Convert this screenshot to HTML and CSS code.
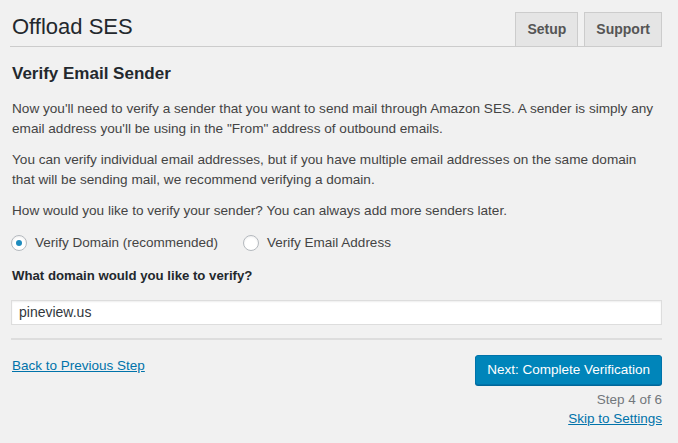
FILE: index.html
```html
<!DOCTYPE html>
<html>
<head>
<meta charset="utf-8">
<link rel="stylesheet" href="styles.css">
</head>
<body>
<div class="wrap">
  <div class="header">
    <h1 class="title">Offload SES</h1>
    <div class="tabs">
      <a class="tab">Setup</a>
      <a class="tab">Support</a>
    </div>
  </div>
  <h2 class="section-title">Verify Email Sender</h2>
  <p class="p1">Now you'll need to verify a sender that you want to send mail through Amazon SES. A sender is simply any email address you'll be using in the "From" address of outbound emails.</p>
  <p class="p2">You can verify individual email addresses, but if you have multiple email addresses on the same domain that will be sending mail, we recommend verifying a domain.</p>
  <p class="p3">How would you like to verify your sender? You can always add more senders later.</p>
  <div class="radios">
    <label class="radio-opt"><span class="radio checked"></span>Verify Domain (recommended)</label>
    <label class="radio-opt"><span class="radio"></span>Verify Email Address</label>
  </div>
  <div class="field-label">What domain would you like to verify?</div>
  <div class="input">pineview.us</div>
  <div class="rule"></div>
  <div class="actions">
    <a class="link back">Back to Previous Step</a>
    <div class="right">
      <span class="button">Next: Complete Verification</span>
      <div class="step">Step 4 of 6</div>
      <a class="link skip">Skip to Settings</a>
    </div>
  </div>
</div>
</body>
</html>
```

FILE: styles.css
```css
html, body {
  margin: 0;
  padding: 0;
  background: #f1f1f1;
}
body {
  font-family: "Liberation Sans", Arial, sans-serif;
  font-size: 13.5px;
  color: #444;
}
.wrap {
  padding: 0 16px 0 11px;
}
.header {
  display: flex;
  justify-content: space-between;
  align-items: flex-end;
  border-bottom: 1px solid #ccc;
  padding-top: 12px;
  margin-left: -1px;
  padding-left: 2px;
}
.title {
  margin: 0 0 5px 0;
  font-size: 22px;
  font-weight: 400;
  line-height: 29px;
  color: #23282d;
}
.tabs {
  display: flex;
  gap: 6px;
  margin-bottom: -1px;
}
.tab {
  display: block;
  box-sizing: border-box;
  height: 35px;
  padding: 0 11px;
  line-height: 33px;
  font-size: 14px;
  font-weight: 700;
  color: #555;
  background: #e5e5e5;
  border: 1px solid #ccc;
}
.section-title {
  margin: 17px 0 0 1px;
  font-size: 17px;
  line-height: 20px;
  font-weight: 700;
  color: #23282d;
}
p {
  margin: 0 0 0 1px;
  line-height: 19.5px;
  font-size: 13.6px;
}
.p1 { margin-top: 15px; }
.p2 { margin-top: 12px; }
.p3 { margin-top: 12px; }
.radios {
  display: flex;
  gap: 25px;
  margin-top: 12px;
  height: 20px;
  align-items: center;
}
.radio-opt {
  display: flex;
  align-items: center;
  gap: 8px;
}
.radio {
  box-sizing: border-box;
  width: 16px;
  height: 16px;
  border-radius: 50%;
  border: 1px solid #b4b9be;
  background: #fff;
  box-shadow: inset 0 1px 2px rgba(0,0,0,0.07);
  display: flex;
  align-items: center;
  justify-content: center;
}
.radio.checked::after {
  content: "";
  width: 6px;
  height: 6px;
  border-radius: 50%;
  background: #1e8cbe;
}
.field-label {
  margin: 13px 0 0 1px;
  line-height: 20px;
  font-size: 13.2px;
  font-weight: 700;
  color: #23282d;
}
.input {
  margin-top: 14px;
  box-sizing: border-box;
  height: 25px;
  background: #fff;
  border: 1px solid #ddd;
  box-shadow: inset 0 1px 2px rgba(0,0,0,0.07);
  padding: 0 7px;
  line-height: 23px;
  font-size: 14px;
  color: #32373c;
}
.rule {
  margin-top: 13px;
  height: 2px;
  background: #ddd;
}
.actions {
  display: flex;
  justify-content: space-between;
  align-items: flex-start;
  margin-top: 15px;
}
.link {
  color: #0073aa;
  text-decoration: underline;
}
.back {
  margin-top: 2px;
  margin-left: 1px;
  line-height: 18px;
}
.right {
  display: flex;
  flex-direction: column;
  align-items: flex-end;
}
.button {
  box-sizing: border-box;
  height: 30px;
  padding: 0 11px;
  line-height: 28px;
  color: #fff;
  background: #0085ba;
  border: 1px solid #0073aa;
  border-radius: 3px;
  box-shadow: 0 1px 0 #006799;
}
.step {
  margin-top: 5px;
  line-height: 19px;
  color: #72777c;
}
.skip {
  line-height: 19px;
}
```
